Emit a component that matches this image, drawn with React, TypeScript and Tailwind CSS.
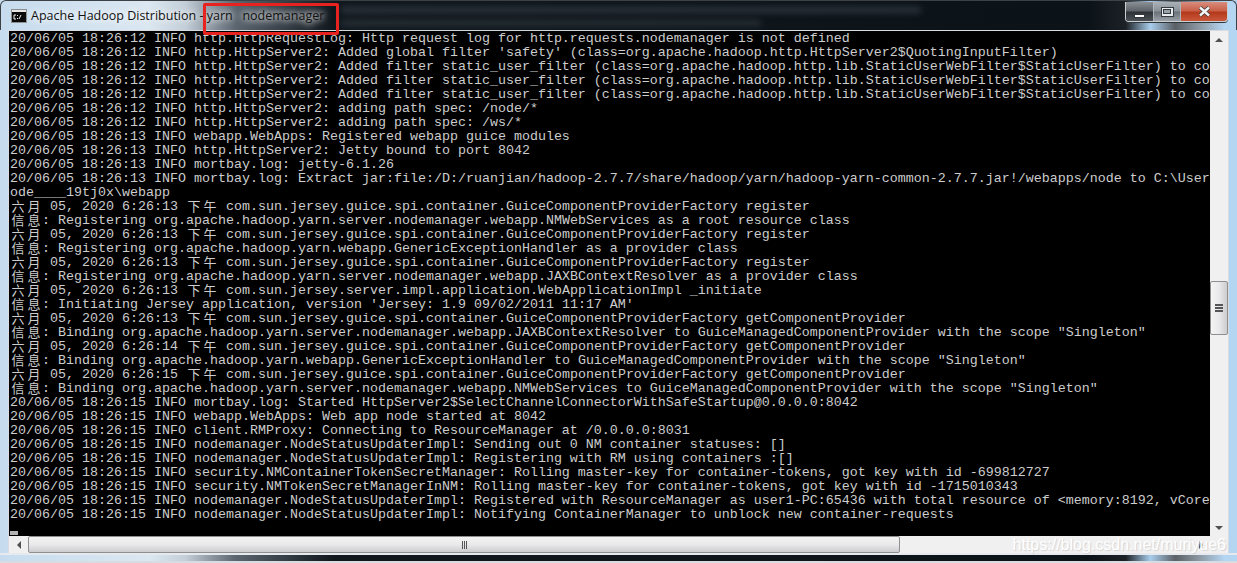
import { Fragment } from 'react';

const LOG_LINES = [
  '20/06/05 18:26:12 INFO http.HttpRequestLog: Http request log for http.requests.nodemanager is not defined',
  '20/06/05 18:26:12 INFO http.HttpServer2: Added global filter \'safety\' (class=org.apache.hadoop.http.HttpServer2$QuotingInputFilter)',
  '20/06/05 18:26:12 INFO http.HttpServer2: Added filter static_user_filter (class=org.apache.hadoop.http.lib.StaticUserWebFilter$StaticUserFilter) to co',
  '20/06/05 18:26:12 INFO http.HttpServer2: Added filter static_user_filter (class=org.apache.hadoop.http.lib.StaticUserWebFilter$StaticUserFilter) to co',
  '20/06/05 18:26:12 INFO http.HttpServer2: Added filter static_user_filter (class=org.apache.hadoop.http.lib.StaticUserWebFilter$StaticUserFilter) to co',
  '20/06/05 18:26:12 INFO http.HttpServer2: adding path spec: /node/*',
  '20/06/05 18:26:12 INFO http.HttpServer2: adding path spec: /ws/*',
  '20/06/05 18:26:13 INFO webapp.WebApps: Registered webapp guice modules',
  '20/06/05 18:26:13 INFO http.HttpServer2: Jetty bound to port 8042',
  '20/06/05 18:26:13 INFO mortbay.log: jetty-6.1.26',
  '20/06/05 18:26:13 INFO mortbay.log: Extract jar:file:/D:/ruanjian/hadoop-2.7.7/share/hadoop/yarn/hadoop-yarn-common-2.7.7.jar!/webapps/node to C:\\User',
  'ode____19tj0x\\webapp',
  '六月 05, 2020 6:26:13 下午 com.sun.jersey.guice.spi.container.GuiceComponentProviderFactory register',
  '信息: Registering org.apache.hadoop.yarn.server.nodemanager.webapp.NMWebServices as a root resource class',
  '六月 05, 2020 6:26:13 下午 com.sun.jersey.guice.spi.container.GuiceComponentProviderFactory register',
  '信息: Registering org.apache.hadoop.yarn.webapp.GenericExceptionHandler as a provider class',
  '六月 05, 2020 6:26:13 下午 com.sun.jersey.guice.spi.container.GuiceComponentProviderFactory register',
  '信息: Registering org.apache.hadoop.yarn.server.nodemanager.webapp.JAXBContextResolver as a provider class',
  '六月 05, 2020 6:26:13 下午 com.sun.jersey.server.impl.application.WebApplicationImpl _initiate',
  '信息: Initiating Jersey application, version \'Jersey: 1.9 09/02/2011 11:17 AM\'',
  '六月 05, 2020 6:26:13 下午 com.sun.jersey.guice.spi.container.GuiceComponentProviderFactory getComponentProvider',
  '信息: Binding org.apache.hadoop.yarn.server.nodemanager.webapp.JAXBContextResolver to GuiceManagedComponentProvider with the scope "Singleton"',
  '六月 05, 2020 6:26:14 下午 com.sun.jersey.guice.spi.container.GuiceComponentProviderFactory getComponentProvider',
  '信息: Binding org.apache.hadoop.yarn.webapp.GenericExceptionHandler to GuiceManagedComponentProvider with the scope "Singleton"',
  '六月 05, 2020 6:26:15 下午 com.sun.jersey.guice.spi.container.GuiceComponentProviderFactory getComponentProvider',
  '信息: Binding org.apache.hadoop.yarn.server.nodemanager.webapp.NMWebServices to GuiceManagedComponentProvider with the scope "Singleton"',
  '20/06/05 18:26:15 INFO mortbay.log: Started HttpServer2$SelectChannelConnectorWithSafeStartup@0.0.0.0:8042',
  '20/06/05 18:26:15 INFO webapp.WebApps: Web app node started at 8042',
  '20/06/05 18:26:15 INFO client.RMProxy: Connecting to ResourceManager at /0.0.0.0:8031',
  '20/06/05 18:26:15 INFO nodemanager.NodeStatusUpdaterImpl: Sending out 0 NM container statuses: []',
  '20/06/05 18:26:15 INFO nodemanager.NodeStatusUpdaterImpl: Registering with RM using containers :[]',
  '20/06/05 18:26:15 INFO security.NMContainerTokenSecretManager: Rolling master-key for container-tokens, got key with id -699812727',
  '20/06/05 18:26:15 INFO security.NMTokenSecretManagerInNM: Rolling master-key for container-tokens, got key with id -1715010343',
  '20/06/05 18:26:15 INFO nodemanager.NodeStatusUpdaterImpl: Registered with ResourceManager as user1-PC:65436 with total resource of <memory:8192, vCore',
  '20/06/05 18:26:15 INFO nodemanager.NodeStatusUpdaterImpl: Notifying ContainerManager to unblock new container-requests',
];

// CJK glyphs take two console cells, latin ones take one
function LogLine({ text }: { text: string }) {
  const parts = text.split(/([\u4e00-\u9fff])/);
  return (
    <div className="h-[14px] whitespace-pre leading-[14px]">
      {parts.map((part, i) =>
        /[\u4e00-\u9fff]/.test(part) ? (
          <span key={i} className="inline-block h-[14px] w-4 -translate-y-px text-center align-top font-['Noto_Sans_CJK_SC',sans-serif] text-[13px] leading-[14px]">
            {part}
          </span>
        ) : (
          <Fragment key={i}>{part}</Fragment>
        ),
      )}
    </div>
  );
}

function ConsoleIcon() {
  return (
    <svg width="16" height="14" viewBox="0 0 16 14" className="shrink-0">
      <rect x="0" y="0" width="16" height="14" fill="#8f8f8f" />
      <rect x="1" y="1" width="14" height="2" fill="#e6e6e6" />
      <rect x="1" y="3" width="14" height="10" fill="#0a0a0a" />
      <path d="M5 6H3v4h2M6.5 6v1M6.5 9v1M8 10l2-4" stroke="#f2f2f2" strokeWidth="1" fill="none" />
    </svg>
  );
}

function WindowButtons() {
  return (
    <div className="mt-px flex h-[20px] w-[103px] overflow-hidden rounded-b-[4px] border border-t-0 border-[#c9ced3] shadow-[0_1px_0_#30353a]">
      <div className="flex w-[28px] items-center justify-center border-r border-[#aeb4ba] bg-[linear-gradient(#8a9096_0%,#5f656b_45%,#2e3338_55%,#4d5258_100%)]">
        <div className="mt-2 h-[4px] w-[11px] border border-[#33383d] bg-white" />
      </div>
      <div className="flex w-[27px] items-center justify-center border-r border-[#aeb4ba] bg-[linear-gradient(#aab0b6_0%,#8b9299_45%,#6c737a_55%,#9aa1a8_100%)]">
        <div className="flex h-[10px] w-[13px] items-center justify-center border border-[#343a40] bg-[#e8ebee]">
          <div className="h-[5px] w-[8px] border border-[#343a40] bg-[#9aa2a9]" />
        </div>
      </div>
      <div className="flex flex-1 items-center justify-center bg-[linear-gradient(#d98d7d_0%,#c9604a_45%,#b53a1c_55%,#c9573a_100%)]">
        <svg width="13" height="11" viewBox="0 0 13 11">
          <path d="M2 1.5l9 8M11 1.5l-9 8" stroke="#3b3b3b" strokeWidth="4" />
          <path d="M2 1.5l9 8M11 1.5l-9 8" stroke="#f4f4f4" strokeWidth="2.4" />
        </svg>
      </div>
    </div>
  );
}

function VerticalScrollbar() {
  return (
    <div className="flex w-[18px] shrink-0 flex-col bg-[#f0f0f0]">
      <div className="flex h-[17px] items-center justify-center">
        <div className="h-0 w-0 border-x-[4px] border-b-[4px] border-x-transparent border-b-[#505050]" />
      </div>
      <div className="h-[233px]" />
      <div className="flex h-[54px] flex-col items-center justify-center gap-px rounded-[2px] border border-[#8e8f8f] bg-[linear-gradient(90deg,#f4f4f4_0%,#e9e9eb_50%,#cdcdcf_100%)]">
        <div className="h-[2px] w-[8px] bg-[#555]" />
        <div className="h-[2px] w-[8px] bg-[#555]" />
        <div className="h-[2px] w-[8px] bg-[#555]" />
      </div>
      <div className="flex-1" />
      <div className="flex h-[17px] items-center justify-center">
        <div className="h-0 w-0 border-x-[4px] border-t-[4px] border-x-transparent border-t-[#505050]" />
      </div>
    </div>
  );
}

function HorizontalScrollbar() {
  return (
    <div className="relative flex h-[17px] shrink-0 bg-[#f0f0f0]">
      <div className="flex w-[19px] items-center justify-center">
        <div className="h-0 w-0 border-y-[4px] border-r-[4px] border-y-transparent border-r-[#505050]" />
      </div>
      <div className="flex w-[872px] items-center justify-center gap-px rounded-[2px] border border-[#8e8f8f] bg-[linear-gradient(#f4f4f4_0%,#e9e9eb_50%,#cdcdcf_100%)]">
        <div className="h-[8px] w-px bg-[#555]" />
        <div className="h-[8px] w-px bg-[#555]" />
        <div className="h-[8px] w-px bg-[#555]" />
      </div>
      <div className="flex-1" />
      <div className="flex w-[19px] items-center justify-center">
        <div className="h-0 w-0 border-y-[4px] border-l-[4px] border-y-transparent border-l-[#505050]" />
      </div>
      <div className="w-[18px]" />
      <span className="absolute right-[2px] top-[-1px] whitespace-nowrap font-['Liberation_Sans',sans-serif] text-[16px] leading-[19px] text-white [text-shadow:1px_1px_1px_#d2d2d2]">
        https://blog.csdn.net/muriyue6
      </span>
    </div>
  );
}

export default function App() {
  return (
    <div className="flex h-[563px] w-[1237px] flex-col overflow-hidden bg-[linear-gradient(90deg,#c6dcee_0%,#dbe7f1_12%,#c3ced8_15%,#5c6670_19%,#10171d_27%,#0b1218_88%,#1c2126_91%,#a9cdec_93%,#5a6066_95%,#8d9aa5_97%,#b5d6f3_99%,#b5d6f3_100%)] font-['Liberation_Mono',monospace]">
      <div className="relative flex h-[30px] shrink-0 items-start justify-between rounded-t-[6px] border-x border-t border-[#3c4145] pl-[10px] pr-[8px]">
        <div className="mt-[7px] flex items-center gap-[4px] font-['Open_Sans',sans-serif] text-[12.5px] leading-[16px] text-[#111] [text-shadow:0_0_6px_#fff,0_0_10px_#fff]">
          <ConsoleIcon />
          <span className="whitespace-pre">Apache Hadoop Distribution - yarn   nodemanager</span>
        </div>
        <div className="absolute left-[340px] top-[6px] h-[6px] w-[580px] bg-[#39424b]/70 blur-[3px]" />
        <div className="absolute left-[340px] top-[19px] h-[6px] w-[420px] bg-[#39424b]/60 blur-[3px]" />
        <WindowButtons />
        <div className="absolute left-[202px] top-[2px] h-[32px] w-[136px] rounded-[2px] border-[3px] border-[#e8231f]" />
      </div>

      <div className="flex min-h-0 flex-1 px-[8px]">
        <div className="flex min-w-0 flex-1 flex-col border border-b-0 border-[#d8dce0]">
          <div className="flex min-h-0 flex-1">
            <div className="min-w-0 flex-1 overflow-hidden bg-black pl-px pt-px text-[13.33px] text-[#cdcdcd]">
              {LOG_LINES.map((line, i) => (
                <LogLine key={i} text={line} />
              ))}
              <div className="mt-[9px] h-[4px] w-[8px] bg-[#b4b4b4]" />
            </div>
            <VerticalScrollbar />
          </div>
          <HorizontalScrollbar />
        </div>
      </div>

      <div className="h-[10px] shrink-0 border-y-[2px] border-t-[#e6eaee] border-b-[#d8dce0]" />
    </div>
  );
}
